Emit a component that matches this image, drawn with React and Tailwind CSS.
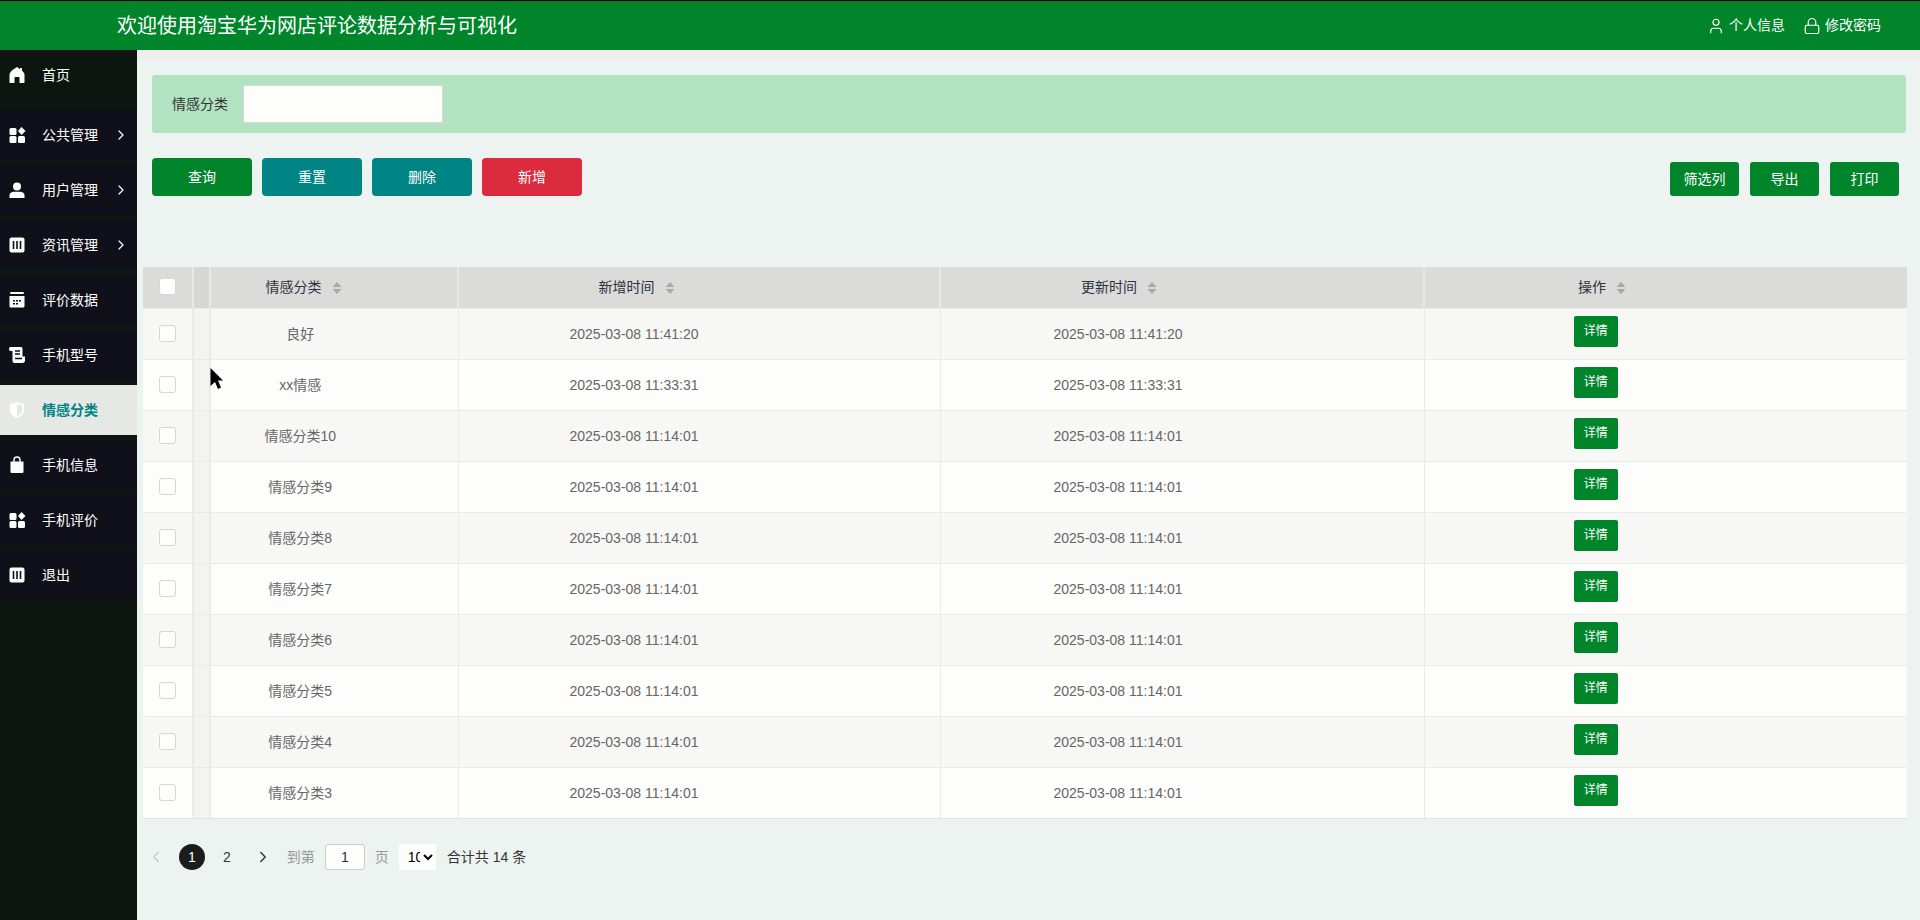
// App.jsx: sentiment category list page of the review analysis admin
import { ChevronLeft, ChevronRight, User, Lock } from 'lucide-react'

const FONT = 'font-["Liberation_Sans","Noto_Sans_CJK_SC",sans-serif]'

const ROWS = [
  { name: '良好', time: '2025-03-08 11:41:20' },
  { name: 'xx情感', time: '2025-03-08 11:33:31' },
  { name: '情感分类10', time: '2025-03-08 11:14:01' },
  { name: '情感分类9', time: '2025-03-08 11:14:01' },
  { name: '情感分类8', time: '2025-03-08 11:14:01' },
  { name: '情感分类7', time: '2025-03-08 11:14:01' },
  { name: '情感分类6', time: '2025-03-08 11:14:01' },
  { name: '情感分类5', time: '2025-03-08 11:14:01' },
  { name: '情感分类4', time: '2025-03-08 11:14:01' },
  { name: '情感分类3', time: '2025-03-08 11:14:01' },
]

function HomeIcon() {
  return (
    <svg width="18" height="18" viewBox="0 0 18 18" fill="#fff">
      <path d="M9 1 L12 3.2 V2 H14 V4.8 C15.6 6 16.5 7.2 16.5 9 V16 C16.5 16.6 16.1 17 15.5 17 H11.5 V12 C11.5 11.4 11.1 11 10.5 11 H7.5 C6.9 11 6.5 11.4 6.5 12 V17 H2.5 C1.9 17 1.5 16.6 1.5 16 V9 C1.5 7 3 5.2 4.5 4 Z" />
    </svg>
  )
}

function AppsIcon() {
  return (
    <svg width="18" height="18" viewBox="0 0 18 18" fill="#fff">
      <rect x="1.5" y="2" width="7" height="7" rx="1.5" />
      <rect x="1.5" y="10" width="7" height="7" rx="1.5" />
      <rect x="10" y="10" width="7" height="7" rx="1.5" />
      <path d="M13.5 1 L17.5 5 L13.5 9 L10 5 Z" />
    </svg>
  )
}

function UserIcon() {
  return (
    <svg width="18" height="18" viewBox="0 0 18 18" fill="#fff">
      <circle cx="9" cy="5.5" r="4" />
      <path d="M1.5 17 V14.5 C1.5 12 3.5 10.8 6 10.8 H12 C14.5 10.8 16.5 12 16.5 14.5 V17 Z" />
    </svg>
  )
}

function BarsIcon() {
  return (
    <svg width="18" height="18" viewBox="0 0 18 18">
      <rect x="1.5" y="1.5" width="15" height="15" rx="2" fill="#fff" />
      <path d="M5.5 5 V13 M9 5 V13 M12.5 5 V13" stroke="#10101a" strokeWidth="1.6" />
    </svg>
  )
}

function CalendarIcon() {
  return (
    <svg width="18" height="18" viewBox="0 0 18 18" fill="#fff">
      <rect x="2" y="1" width="14" height="2" rx="1" />
      <path d="M1.5 5 H16.5 V15 C16.5 16 15.8 16.5 15 16.5 H3 C2.2 16.5 1.5 16 1.5 15 Z" />
      <path d="M5 9 H7 V10.5 H5 Z M8 9 H10 V10.5 H8 Z M11 9 H13 V10.5 H11 Z M5 12 H7 V13.5 H5 Z M8 12 H10 V13.5 H8 Z" fill="#10101a" />
    </svg>
  )
}

function ScrollIcon() {
  return (
    <svg width="18" height="18" viewBox="0 0 18 18" fill="#fff">
      <path d="M1 2.5 C1 1.5 2 1 3 1 H13 C14 1 14.5 1.8 14.5 3 V10.5 H17 V14.5 C17 16 16 17 14.5 17 H6.5 C5 17 4.5 16 4.5 14.5 V5 H2.5 C1.5 5 1 4 1 2.5 Z" />
      <path d="M7 5 H12 M7 8 H12 M7 12.5 H14" stroke="#10101a" strokeWidth="1.4" />
    </svg>
  )
}

function ShieldIcon() {
  return (
    <svg width="18" height="18" viewBox="0 0 18 18">
      <path d="M9 1 L16 3 V9 C16 13 13 15.8 9 17 C5 15.8 2 13 2 9 V3 Z" fill="#fff" />
      <path d="M9 3 V15 C12 14 14 12 14 9 V4.5 Z" fill="#e6e8e5" />
    </svg>
  )
}

function BagIcon() {
  return (
    <svg width="18" height="18" viewBox="0 0 18 18" fill="#fff">
      <path d="M2.5 5.5 H15.5 V15.5 C15.5 16.5 14.8 17 14 17 H4 C3.2 17 2.5 16.5 2.5 15.5 Z" />
      <path d="M6 7 V4 C6 2.3 7.3 1 9 1 C10.7 1 12 2.3 12 4 V7" fill="none" stroke="#fff" strokeWidth="1.4" />
    </svg>
  )
}

const MENU = [
  { label: '首页', icon: HomeIcon },
  { label: '公共管理', icon: AppsIcon, arrow: true },
  { label: '用户管理', icon: UserIcon, arrow: true },
  { label: '资讯管理', icon: BarsIcon, arrow: true },
  { label: '评价数据', icon: CalendarIcon },
  { label: '手机型号', icon: ScrollIcon },
  { label: '情感分类', icon: ShieldIcon, active: true },
  { label: '手机信息', icon: BagIcon },
  { label: '手机评价', icon: AppsIcon },
  { label: '退出', icon: BarsIcon },
]

function SortCaret() {
  return (
    <svg width="10" height="14" viewBox="0 0 10 14" className="ml-[10px] inline-block" fill="#a8aaa8">
      <path d="M5 1 L9.5 6 H0.5 Z M5 13 L0.5 8 H9.5 Z" />
    </svg>
  )
}

function Sidebar() {
  return (
    <aside className="w-[137px] shrink-0 bg-[#0c150f]">
      {MENU.map((item, i) => {
        const Icon = item.icon
        let tone = 'mb-[5px] bg-[#10101a] text-white'
        if (i === 0) tone = 'mb-[10px] text-white'
        if (item.active) tone = 'mb-[5px] bg-[#e6e8e5] font-bold text-[#008484]'
        return (
          <div key={item.label} className={`flex h-[50px] items-center pl-[8px] text-[14px] ${tone}`}>
            <Icon />
            <span className="ml-[16px]">{item.label}</span>
            {item.arrow && <ChevronRight size={16} strokeWidth={1.8} className="ml-[15px] text-white" />}
          </div>
        )
      })}
    </aside>
  )
}

function ActionButton({ color, children }) {
  return (
    <button className={`h-[38px] w-[100px] rounded-[4px] text-[14px] text-white ${color}`}>{children}</button>
  )
}

function ToolButton({ children }) {
  return (
    <button className="h-[34px] w-[69px] rounded-[3px] bg-[#00852b] text-[14px] text-white">{children}</button>
  )
}

function Checkbox({ head }) {
  return (
    <span className={`ml-[16px] block h-[17px] w-[17px] rounded-[3px] border border-[#d6d6d6] ${head ? 'mb-[2px] bg-white' : 'bg-[#fdfdfb]'}`} />
  )
}

function DataTable() {
  return (
    <div className="ml-[6px] mr-[13px] mt-[71px] border-b border-[#dfe4e2]">
      <table className="w-full table-fixed border-collapse text-center text-[14px]">
        <colgroup>
          <col className="w-[50px]" />
          <col className="w-[17px]" />
          <col className="w-[248px]" />
          <col className="w-[482px]" />
          <col className="w-[484px]" />
          <col />
        </colgroup>
        <thead>
          <tr className="h-[41px] bg-[#dbdbd9] text-[#2b3340]">
            <th className="border-r-2 border-[#e6e8e5] font-normal"><Checkbox head /></th>
            <th className="border-r-2 border-[#e6e8e5] bg-[#d6d6d4] font-normal" />
            <th className="border-r-2 border-[#e6e8e5] pr-[61px] font-normal">情感分类<SortCaret /></th>
            <th className="border-r-2 border-[#e6e8e5] pr-[125px] font-normal">新增时间<SortCaret /></th>
            <th className="border-r-2 border-[#e6e8e5] pr-[126px] font-normal">更新时间<SortCaret /></th>
            <th className="pr-[128px] font-normal">操作<SortCaret /></th>
          </tr>
        </thead>
        <tbody className="text-[#666666]">
          {ROWS.map((row, i) => (
            <tr key={row.name} className={`h-[51px] border-t border-[#e8ebe9] ${i % 2 === 0 ? 'bg-[#f7f8f6]' : 'bg-[#fdfdfb]'}`}>
              <td className="border-r-2 border-[#e8ebe9]"><Checkbox /></td>
              <td className="border-r-2 border-[#e8ebe9] bg-[#f3f4f2]" />
              <td className="border-r border-[#e8ebe9] pr-[68px] pt-[2px]">{row.name}</td>
              <td className="border-r border-[#e8ebe9] pr-[130px] pt-[2px]">{row.time}</td>
              <td className="border-r border-[#e8ebe9] pr-[128px] pt-[2px]">{row.time}</td>
              <td className="pb-[5px] pr-[140px]">
                <button className="h-[31px] w-[44px] rounded-[2px] bg-[#00852b] text-[12px] text-white">详情</button>
              </td>
            </tr>
          ))}
        </tbody>
      </table>
    </div>
  )
}

function Pagination() {
  return (
    <div className="ml-[6px] mt-[24px] flex h-[28px] items-center text-[14px]">
      <ChevronLeft size={18} strokeWidth={1.6} className="ml-[4px] text-[#c4c6c4]" />
      <span className="ml-[14px] flex h-[26px] w-[26px] items-center justify-center rounded-full bg-[#1c1c1c] text-white">1</span>
      <span className="ml-[18px] text-[#333333]">2</span>
      <ChevronRight size={18} strokeWidth={1.8} className="ml-[23px] text-[#333333]" />
      <span className="ml-[15px] text-[#999999]">到第</span>
      <input
        readOnly
        defaultValue="1"
        className="ml-[10px] h-[26px] w-[40px] rounded-[3px] border border-[#c9cdcb] bg-[#fdfdfb] text-center text-[#333333]"
      />
      <span className="ml-[10px] text-[#999999]">页</span>
      {/* the page-size select is narrow enough to clip its value, as in the original */}
      <select className="ml-[10px] h-[26px] w-[37px] bg-[#fdfdfb] pl-[5px] text-black">
        <option>10</option>
        <option>20</option>
      </select>
      <span className="ml-[11px] text-[#333333]">合计共 14 条</span>
    </div>
  )
}

export default function App() {
  return (
    <div className={`flex h-[920px] flex-col overflow-hidden ${FONT}`}>
      <header className="flex h-[50px] shrink-0 items-center border-t border-black bg-[#00852b] text-white">
        <h1 className="ml-[117px] text-[20px] font-normal">欢迎使用淘宝华为网店评论数据分析与可视化</h1>
        <div className="ml-auto mr-[39px] flex items-center text-[14px]">
          <User size={18} strokeWidth={1.6} />
          <span className="ml-[4px]">个人信息</span>
          <Lock size={18} strokeWidth={1.6} className="ml-[18px]" />
          <span className="ml-[4px]">修改密码</span>
        </div>
      </header>
      <div className="flex flex-1">
        <Sidebar />
        <main className="relative flex-1 bg-[#edf3f0]">
          <div className="h-[10px] bg-[#eeeeee]" />
          <section className="ml-[15px] mr-[14px] mt-[15px] flex h-[58px] items-center rounded-[3px] bg-[#b1e3c1] pl-[20px] text-[14px] text-[#333333]">
            <label>情感分类</label>
            <input className="ml-[15px] h-[38px] w-[200px] border border-[#d8d8d8] bg-[#fdfdfb]" />
          </section>
          <div className="ml-[15px] mr-[21px] mt-[25px] flex h-[38px] items-center">
            <div className="flex gap-[10px]">
              <ActionButton color="bg-[#00852b]">查询</ActionButton>
              <ActionButton color="bg-[#008484]">重置</ActionButton>
              <ActionButton color="bg-[#008484]">删除</ActionButton>
              <ActionButton color="bg-[#dc2a3e]">新增</ActionButton>
            </div>
            <div className="ml-auto mt-[4px] flex gap-[11px]">
              <ToolButton>筛选列</ToolButton>
              <ToolButton>导出</ToolButton>
              <ToolButton>打印</ToolButton>
            </div>
          </div>
          <DataTable />
          <Pagination />
          {/* mouse pointer caught in the screenshot */}
          <svg width="14" height="22" viewBox="0 0 14 22" className="absolute left-[73px] top-[318px]" fill="#000">
            <path d="M0.5 0 L13 12.5 H8 L11 19.5 L8 21 L5 14 L0.5 18 Z" />
          </svg>
        </main>
      </div>
    </div>
  )
}
